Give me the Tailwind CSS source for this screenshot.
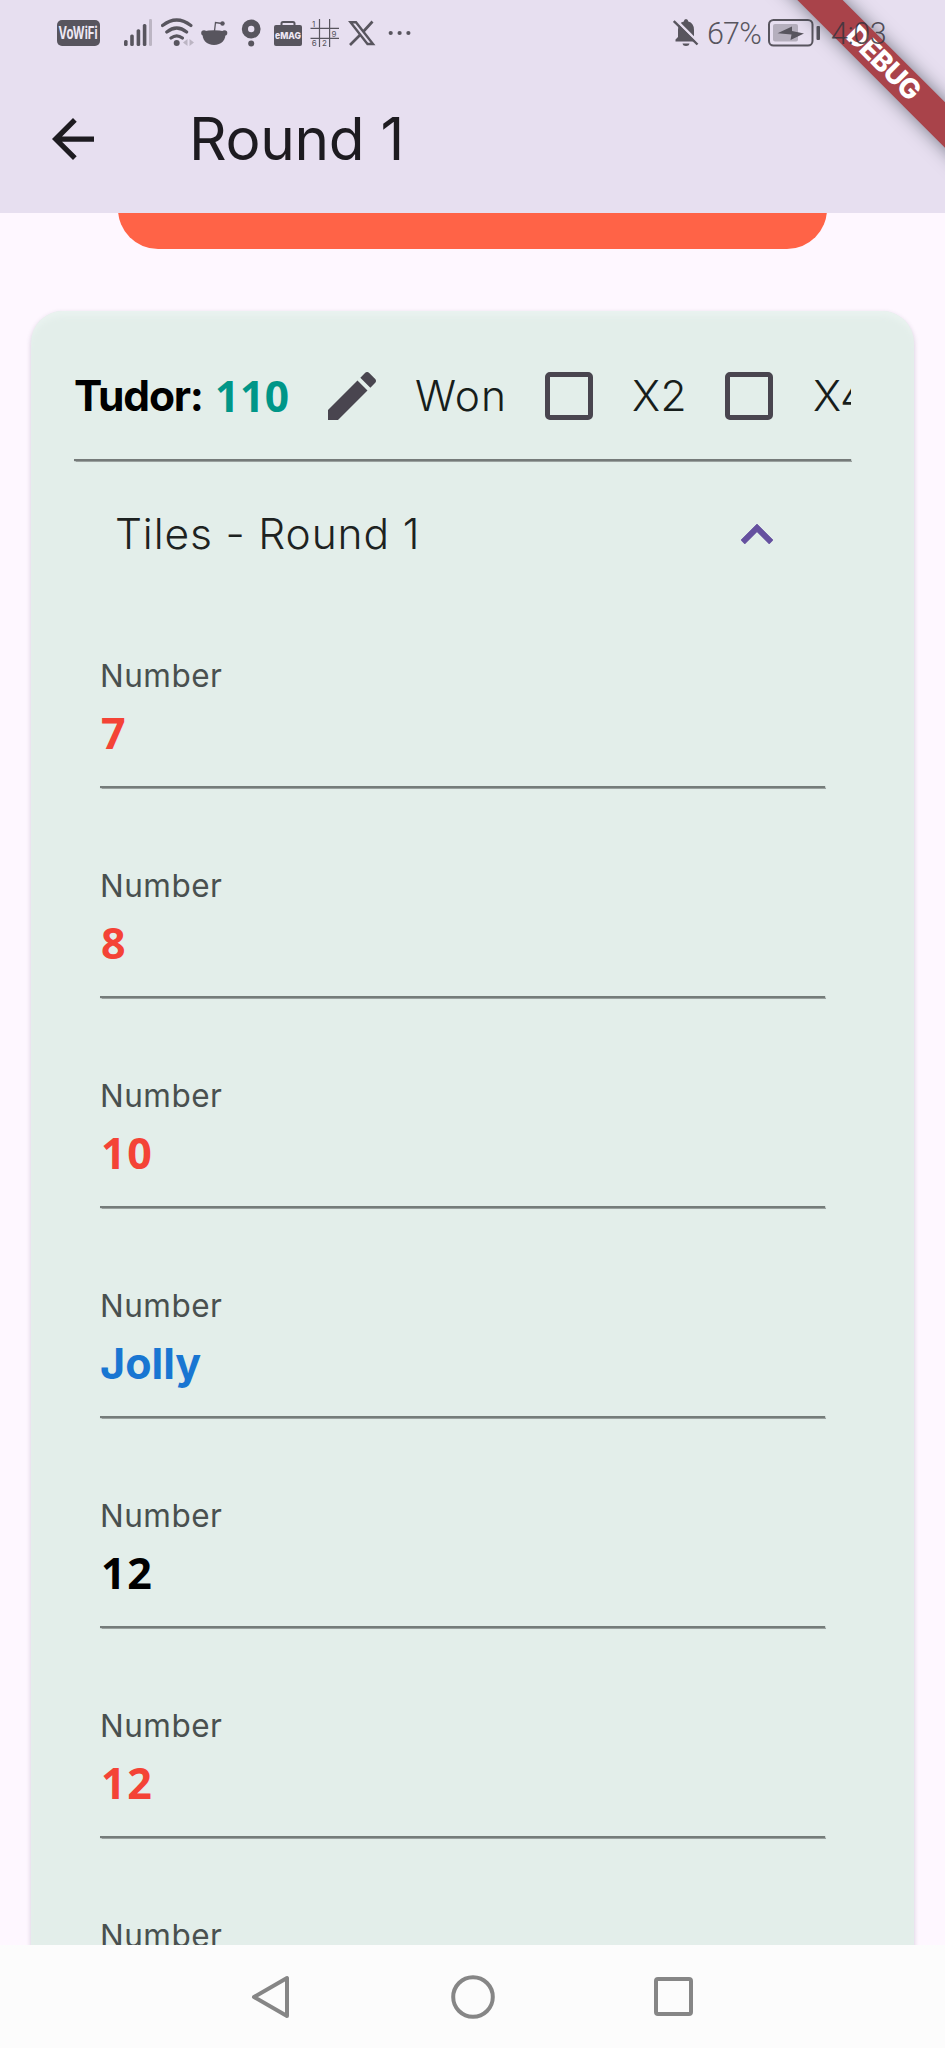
<!DOCTYPE html>
<html lang="en">
<head>
<meta charset="utf-8">
<title>Round 1</title>
<script src="https://cdn.jsdelivr.net/npm/@tailwindcss/browser@4"></script>
</head>
<body class="bg-[#fef7ff]">
<div class="relative flex h-[2048px] w-[945px] flex-col overflow-hidden bg-[#fef7ff] font-[Inter,sans-serif]">

  <header class="h-[212.600px] shrink-0 bg-[#e7dff0]">
    <!-- Status bar -->
    <div class="flex h-[66px] items-center pl-[57px] text-[#58555e]">
      <div class="flex h-[26px] w-[43px] shrink-0 items-center justify-center rounded-[5px] bg-[#58555e]">
        <span class="scale-x-[.67] text-[17px] font-bold leading-none text-[#eee8f4]">VoWiFi</span>
      </div>
      <svg class="ml-6 h-[30px] w-[28px] shrink-0" viewBox="124 18 28 30" fill="currentColor">
        <rect x="124" y="40" width="3.6" height="6" rx="1.5"/><rect x="130.2" y="34.5" width="3.6" height="11.5" rx="1.5"/><rect x="136.6" y="29.3" width="3.6" height="16.7" rx="1.5"/><rect x="142.8" y="24" width="3.6" height="22" rx="1.5"/><rect x="149" y="19" width="3" height="27" rx="1.3" opacity=".3"/>
      </svg>
      <svg class="ml-[9px] h-[30px] w-[33px] shrink-0" viewBox="161 18 33 30" fill="none" stroke="currentColor" stroke-width="3.2" stroke-linecap="round">
        <path d="M162.500 25.500Q176.700 14.500 190.900 25.500M166.800 32Q176.700 24 186.600 32M171 38Q176.700 33.600 182.400 38"/>
        <circle cx="176.700" cy="43" r="3" fill="currentColor" stroke="none"/>
        <path d="M187.500 39v7l-4.500-3.500zM189.500 39v7l4.500-3.500z" fill="currentColor" stroke="none" opacity=".3"/>
      </svg>
      <svg class="ml-[7px] h-[30px] w-[27px] shrink-0" viewBox="201 18 27 30" fill="currentColor">
        <path d="M203 31.500Q214 29 225 31.500C227 40 221 45 214 45S201 40 203 31.500Z"/><circle cx="204" cy="33" r="2.800"/><circle cx="224.500" cy="33" r="2.800"/><circle cx="222.500" cy="23.500" r="2.200"/>
        <path d="M214.500 31L215.500 22.500L222 23.500" fill="none" stroke="currentColor" stroke-width="1.300"/>
      </svg>
      <svg class="ml-[13px] h-[30px] w-[21px] shrink-0" viewBox="241 18 21 30" fill="currentColor">
        <circle cx="251.200" cy="29" r="6.300" fill="none" stroke="currentColor" stroke-width="6.200"/><circle cx="251.200" cy="43.500" r="3"/>
      </svg>
      <svg class="ml-3 h-[30px] w-[28px] shrink-0" viewBox="274 18 28 30" fill="currentColor">
        <rect x="274" y="25" width="28" height="21" rx="2"/><path d="M281.500 26V23.500Q281.500 22 283 22H293Q294.500 22 294.500 23.500V26" fill="none" stroke="currentColor" stroke-width="2"/>
        <text x="288" y="38.500" text-anchor="middle" textLength="26" lengthAdjust="spacingAndGlyphs" font-size="9.500" font-weight="800" fill="#eee8f4">eMAG</text>
      </svg>
      <svg class="ml-2 h-[30px] w-[30px] shrink-0 overflow-visible" viewBox="310 18 30 30" fill="currentColor">
        <path d="M319.500 19V47M329.600 19V47M310.500 28.300H339M310.500 38.300H339" stroke="currentColor" stroke-width="1.200"/>
        <text x="312" y="26.500" font-size="8">1</text><text x="331.500" y="36.500" font-size="8">9</text><text x="311.700" y="46.300" font-size="8">6</text><text x="322" y="46.300" font-size="8">2</text>
      </svg>
      <svg class="ml-2 h-[30px] w-[28px] shrink-0" viewBox="348 18 28 30" fill="none" stroke="currentColor">
        <path d="M350.500 22.300H356L373 44H367.500Z" stroke-width="2.400"/><path d="M372.500 21.500L363 32M360 35L350 45" stroke-width="2.700"/>
      </svg>
      <svg class="ml-3 h-[30px] w-[24px] shrink-0" viewBox="388 18 24 30" fill="currentColor">
        <circle cx="390.700" cy="33" r="2.100"/><circle cx="399.600" cy="33" r="2.100"/><circle cx="408.400" cy="33" r="2.100"/>
      </svg>
      <svg class="ml-[261px] h-[30px] w-[26px] shrink-0" viewBox="673 18 26 30" fill="currentColor">
        <path d="M675.500 41.500V39.500L678 37V30Q678 23 683.800 21.500Q684 19 686 19T688.300 21.500Q694 23 694 30V37L696.500 39.500V41.500ZM682.500 43.500H689.500Q689 46 686 46T682.500 43.500Z"/>
        <path d="M675.500 19.500L699 43" stroke="#e7dff0" stroke-width="2.500"/><path d="M673.800 21L697.500 44.500" stroke="currentColor" stroke-width="2.400"/>
      </svg>
      <span class="ml-[8px] w-[61px] whitespace-nowrap pt-0.5 text-[30.500px] font-[350] leading-none tracking-[-.800px] font-[Roboto]">67%</span>
      <svg class="h-[30px] w-[53px] shrink-0" viewBox="768 18 53 30" fill="currentColor">
        <rect x="769" y="20" width="43.500" height="25.500" rx="4.500" fill="none" stroke="currentColor" stroke-width="2"/>
        <rect x="773" y="24" width="25" height="17.500" rx="2" opacity=".35"/>
        <path d="M777.500 33.200L792 26.500V31L804 33.500L790.500 40L791.500 34.500Z"/>
        <rect x="816.500" y="26" width="3.500" height="14" rx="1"/>
      </svg>
      <span class="relative z-20 ml-[10px] whitespace-nowrap pt-0.5 text-[30.500px] font-[350] leading-none tracking-[-.5px] text-[#38343e]/85 font-[Roboto]">4:03</span>
    </div>
    <!-- App bar -->
    <div class="flex h-[146px] items-center pl-[52px] text-[#1d1b20]">
      <svg class="h-[42px] w-[42px]" viewBox="4 4 16 16" fill="currentColor"><path d="M20 11H7.830l5.590-5.590L12 4l-8 8 8 8 1.410-1.410L7.830 13H20v-2z"/></svg>
      <h1 class="ml-[95px] whitespace-nowrap text-[58.500px] leading-none tracking-[-.300px]">Round 1</h1>
    </div>
  </header>

  <main class="min-h-0 flex-1 overflow-hidden">
    <div class="mx-[118px] h-[36px] overflow-hidden">
      <div class="-mt-[60px] h-[96px] rounded-[40px] bg-[#ff6347]"></div>
    </div>

    <section class="ml-[31px] mt-[62.400px] h-[1800px] w-[883px] rounded-[32px] bg-[#e3eeea] pl-[43px] pr-[63px] pt-[22px] shadow-[0_2px_5px_rgba(60,40,80,0.22),inset_0_8px_6px_-3px_#eaf3f0]">
      <div class="flex h-[126px] items-center overflow-hidden whitespace-nowrap text-[42.500px] text-[#171d1b]">
        <span class="w-[141px] shrink-0 font-bold tracking-[-1.200px] text-black">Tudor:</span>
        <span class="w-[113px] shrink-0 font-bold text-[#009688] tracking-[.600px] font-['Open_Sans']">110</span>
        <svg class="h-[48px] w-[48px] shrink-0" viewBox="3 3 18 18" fill="#49454f"><path d="M3 17.250V21h3.750L17.810 9.940l-3.750-3.750L3 17.250zM20.710 7.040c.39-.39.39-1.020 0-1.410l-2.340-2.340c-.39-.39-1.020-.39-1.410 0l-1.830 1.830 3.750 3.750 1.830-1.830z"/></svg>
        <span class="ml-[39px] w-[130px] shrink-0 font-[360] tracking-[.900px]">Won</span>
        <span class="size-[48px] shrink-0 rounded-[5px] border-[5px] border-[#49454f]"></span>
        <span class="ml-[39px] w-[93px] shrink-0 font-[360] tracking-[.500px]">X2</span>
        <span class="size-[48px] shrink-0 rounded-[5px] border-[5px] border-[#49454f]"></span>
        <span class="ml-[40px] shrink-0 font-[360] tracking-[.500px]">X4</span>
      </div>
      <div class="h-[2px] bg-[#757a79] shadow-[0_0_1px_.5px_#9aa19f]"></div>

      <div class="flex h-[117px] items-center justify-between pl-[41px] pr-[78px] pt-[30px]">
        <span class="whitespace-nowrap text-[42.500px] leading-none tracking-[.850px] text-[#1d2221] font-[360]">Tiles - Round 1</span>
        <svg class="h-[20px] w-[32px]" viewBox="6 8 12 7.410" fill="#65509f" stroke="#65509f" stroke-width=".3"><path d="M12 8l-6 6 1.410 1.410L12 10.830l4.590 4.580L18 14z"/></svg>
      </div>

      <div id="fields" class="ml-[26px] w-[725px]"></div>
    </section>
  </main>

  <!-- System navigation -->
  <nav class="relative z-10 flex h-[103px] shrink-0 items-center bg-[#fcfcfc] pl-[251px] text-[#868686]">
    <svg class="h-[44px] w-[39px]" viewBox="0 0 39 44" fill="none" stroke="currentColor" stroke-width="4" stroke-linejoin="round"><path d="M36 3V41L3 22Z"/></svg>
    <svg class="ml-[161px] h-[44px] w-[44px]" viewBox="0 0 44 44" fill="none" stroke="currentColor" stroke-width="4"><circle cx="22" cy="22" r="19.800"/></svg>
    <span class="ml-[159px] size-[39px] rounded-[4px] border-4 border-current"></span>
  </nav>

  <!-- Debug ribbon -->
  <div class="absolute left-[733px] top-[47px] z-10 flex h-[32px] w-[300px] rotate-45 items-center justify-center bg-[#a9434a] text-[27.500px] font-extrabold leading-none tracking-[-.800px] text-white shadow-[0_0_18px_rgba(40,50,60,0.6)]">DEBUG</div>
</div>

<script>
  const fields = [['7','text-[#f44336]'],['8','text-[#f44336]'],['10','text-[#f44336]'],['Jolly','text-[#1976d2]'],['12','text-black'],['12','text-[#f44336]'],['7','text-black']];
  document.getElementById('fields').innerHTML = fields.map(([value, color]) => {
    const face = value === 'Jolly' ? 'font-[Inter]' : "font-['Open_Sans'] tracking-[1.600px] indent-px";
    return `<div class="pt-[78px]">
      <div class="h-[40px] text-[31.500px] leading-[40px] tracking-[.500px] text-[#49504f]">Number</div>
      <div class="mt-[12px] h-[50px] text-[43px] font-bold leading-[50px] ${face} ${color}">${value}</div>
      <div class="mt-[28px] h-[2px] bg-[#757c7a] shadow-[0_0_1px_.5px_#9aa19f]"></div>
    </div>`;
  }).join('');
</script>
</body>
</html>
